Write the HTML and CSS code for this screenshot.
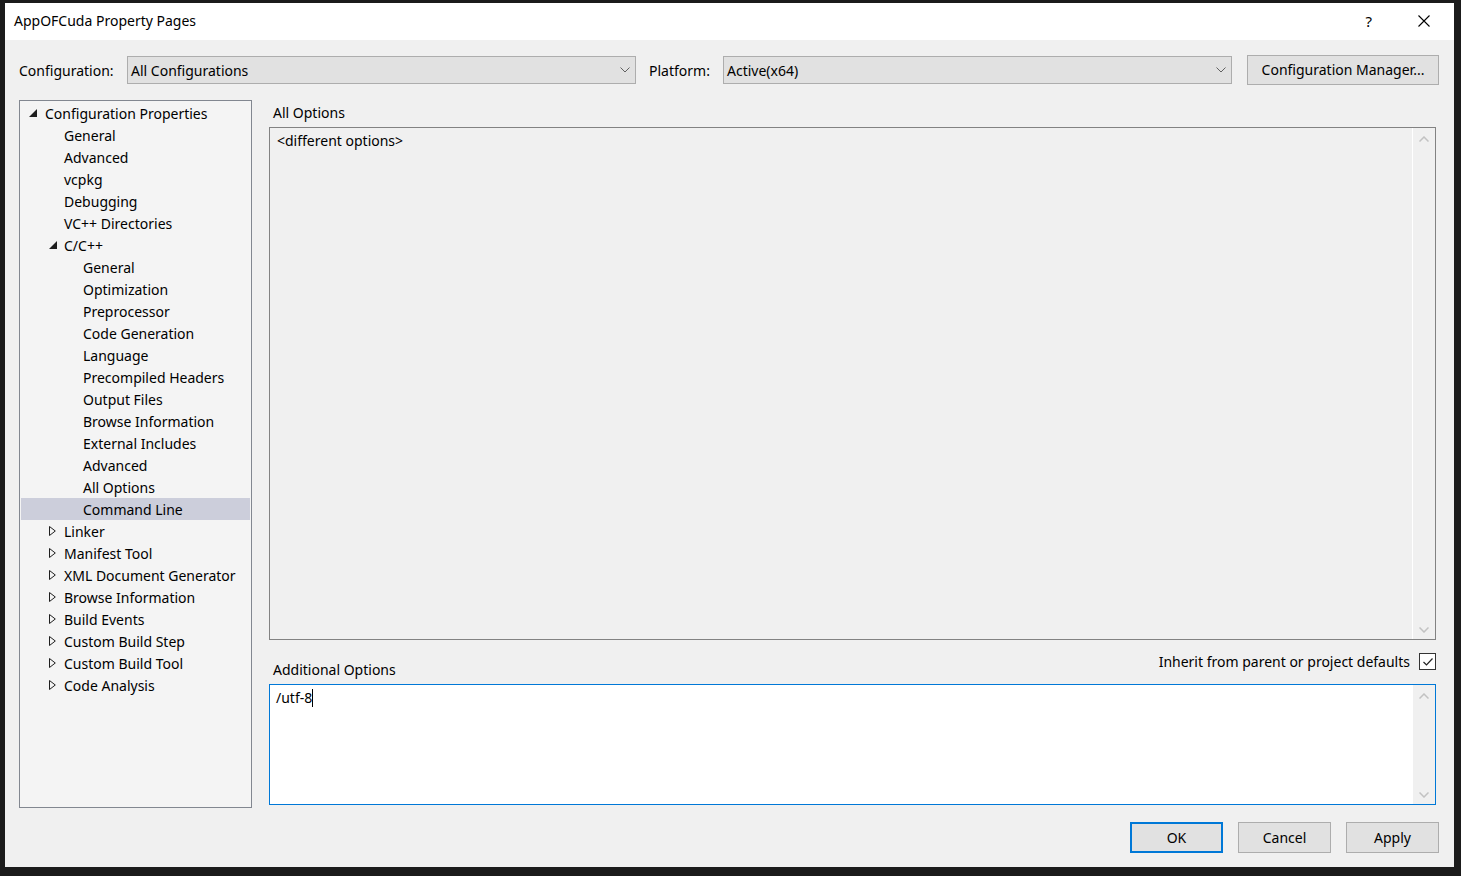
FILE: index.html
```html
<!DOCTYPE html>
<html lang="en">
<head>
    <meta charset="UTF-8">
    <title>AppOFCuda Property Pages</title>
    <link rel="stylesheet" href="styles.css">
</head>
<body>
    <div class="dialog">
        <!-- Title bar -->
        <div class="title-bar">
            <span class="title">AppOFCuda Property Pages</span>
            <span class="help">?</span>
            <svg class="close" width="12" height="12" viewBox="0 0 12 12"><path d="M0.5 0.5 L11.5 11.5 M11.5 0.5 L0.5 11.5" stroke="#000" stroke-width="1.1" fill="none"/></svg>
        </div>

        <div class="dialog-body">
            <!-- Configuration row -->
            <div class="config-row">
                <span class="config-label">Configuration:</span>
                <div class="combo combo-config">
                    <span>All Configurations</span>
                    <svg class="chevron" width="10" height="6" viewBox="0 0 10 6"><path d="M0.5 0.5 L5 5 L9.5 0.5" stroke="#606060" fill="none"/></svg>
                </div>
                <span class="platform-label">Platform:</span>
                <div class="combo combo-platform">
                    <span>Active(x64)</span>
                    <svg class="chevron" width="10" height="6" viewBox="0 0 10 6"><path d="M0.5 0.5 L5 5 L9.5 0.5" stroke="#606060" fill="none"/></svg>
                </div>
                <button class="btn btn-manager">Configuration Manager...</button>
            </div>

            <!-- Main area -->
            <div class="main">
                <div class="tree" id="tree"></div>

                <div class="options">
                    <div class="options-label">All Options</div>
                    <div class="textbox textbox-all">
                        <div class="textbox-text">&lt;different options&gt;</div>
                        <div class="scrollbar">
                            <svg width="10" height="6" viewBox="0 0 10 6"><path d="M0.5 5.5 L5 1 L9.5 5.5" stroke="#c2c2c2" stroke-width="1.5" fill="none"/></svg>
                            <svg width="10" height="6" viewBox="0 0 10 6"><path d="M0.5 0.5 L5 5 L9.5 0.5" stroke="#c2c2c2" stroke-width="1.5" fill="none"/></svg>
                        </div>
                    </div>
                    <div class="additional-row">
                        <span class="additional-label">Additional Options</span>
                        <span class="inherit">
                            Inherit from parent or project defaults
                            <span class="checkbox">
                                <svg width="14" height="14" viewBox="0 0 14 14"><path d="M2.5 7 L5.5 10 L11.5 3.5" stroke="#222" stroke-width="1.2" fill="none"/></svg>
                            </span>
                        </span>
                    </div>
                    <div class="textbox textbox-additional">
                        <div class="textbox-text">/utf-8<span class="caret"></span></div>
                        <div class="scrollbar">
                            <svg width="10" height="6" viewBox="0 0 10 6"><path d="M0.5 5.5 L5 1 L9.5 5.5" stroke="#c2c2c2" stroke-width="1.5" fill="none"/></svg>
                            <svg width="10" height="6" viewBox="0 0 10 6"><path d="M0.5 0.5 L5 5 L9.5 0.5" stroke="#c2c2c2" stroke-width="1.5" fill="none"/></svg>
                        </div>
                    </div>
                </div>
            </div>

            <!-- Buttons -->
            <div class="button-row">
                <button class="btn btn-ok">OK</button>
                <button class="btn">Cancel</button>
                <button class="btn">Apply</button>
            </div>
        </div>
    </div>

    <script>
        // Tree items: [label, level, state] state: 'open', 'closed' or ''
        const treeItems = [
            ['Configuration Properties', 0, 'open'],
            ['General', 1, ''],
            ['Advanced', 1, ''],
            ['vcpkg', 1, ''],
            ['Debugging', 1, ''],
            ['VC++ Directories', 1, ''],
            ['C/C++', 1, 'open'],
            ['General', 2, ''],
            ['Optimization', 2, ''],
            ['Preprocessor', 2, ''],
            ['Code Generation', 2, ''],
            ['Language', 2, ''],
            ['Precompiled Headers', 2, ''],
            ['Output Files', 2, ''],
            ['Browse Information', 2, ''],
            ['External Includes', 2, ''],
            ['Advanced', 2, ''],
            ['All Options', 2, ''],
            ['Command Line', 2, '', true],
            ['Linker', 1, 'closed'],
            ['Manifest Tool', 1, 'closed'],
            ['XML Document Generator', 1, 'closed'],
            ['Browse Information', 1, 'closed'],
            ['Build Events', 1, 'closed'],
            ['Custom Build Step', 1, 'closed'],
            ['Custom Build Tool', 1, 'closed'],
            ['Code Analysis', 1, 'closed']
        ];

        const openArrow = '<svg width="8" height="8" viewBox="0 0 8 8"><path d="M8 0 L8 8 L0 8 Z" fill="#1e1e1e"/></svg>';
        const closedArrow = '<svg width="7" height="10" viewBox="0 0 7 10"><path d="M0.5 0.5 L6.3 5 L0.5 9.5 Z" stroke="#1e1e1e" fill="none"/></svg>';

        const tree = document.getElementById('tree');
        treeItems.forEach(function(item) {
            const row = document.createElement('div');
            row.className = 'tree-row level-' + item[1] + (item[3] ? ' selected' : '');
            const arrow = document.createElement('span');
            arrow.className = 'tree-arrow';
            if (item[2] === 'open') arrow.innerHTML = openArrow;
            if (item[2] === 'closed') arrow.innerHTML = closedArrow;
            const label = document.createElement('span');
            label.textContent = item[0];
            row.appendChild(arrow);
            row.appendChild(label);
            tree.appendChild(row);
        });
    </script>
</body>
</html>
```

FILE: styles.css
```css
body {
    margin: 0;
    background: #1b1b1b;
    font-family: "Noto Sans", sans-serif;
    font-size: 14px;
    color: #000;
}

.dialog {
    margin: 3px 0 0 5px;
    width: 1449px;
    height: 864px;
    background: #f0f0f0;
    display: flex;
    flex-direction: column;
}

.title-bar {
    height: 37px;
    background: #fff;
    display: flex;
    align-items: center;
    padding-left: 9px;
    padding-right: 24px;
    padding-bottom: 2px;
    box-sizing: border-box;
}

.title {
    flex: 1;
    font-size: 14px;
}

.help {
    font-size: 15px;
    margin-right: 46px;
}

.dialog-body {
    flex: 1;
    display: flex;
    flex-direction: column;
    padding: 15px 15px 0 14px;
}

.config-row {
    display: flex;
    align-items: center;
    height: 29px;
}

.config-label {
    width: 108px;
    padding-top: 2px;
}

.platform-label {
    width: 74px;
    margin-left: 13px;
    padding-top: 2px;
}

.combo {
    box-sizing: border-box;
    width: 509px;
    height: 28px;
    background: #e1e1e1;
    border: 1px solid #adadad;
    display: flex;
    align-items: center;
    padding: 1px 5px 0 3px;
}

.combo span {
    flex: 1;
}

.btn {
    box-sizing: border-box;
    font-family: "Noto Sans", sans-serif;
    font-size: 14px;
    color: #000;
    background: #e1e1e1;
    border: 1px solid #adadad;
    padding: 0;
    width: 93px;
    height: 31px;
}

.btn-manager {
    width: 192px;
    height: 30px;
    margin-left: 15px;
}

.btn-ok {
    border: 2px solid #0078d7;
}

.main {
    display: flex;
    margin-top: 16px;
    height: 708px;
}

.tree {
    box-sizing: border-box;
    width: 233px;
    height: 708px;
    background: #f4f4f4;
    border: 1px solid #828790;
    padding: 1px;
}

.tree-row {
    height: 22px;
    display: flex;
    align-items: center;
    white-space: nowrap;
}

.tree-row.selected {
    background: #cccedb;
}

.level-0 { padding-left: 8px; }
.level-1 { padding-left: 28px; }
.level-2 { padding-left: 47px; }

.level-0 .tree-arrow { width: 16px; }
.level-1 .tree-arrow,
.level-2 .tree-arrow { width: 15px; }

.tree-arrow {
    display: flex;
    align-items: center;
}

.options {
    margin-left: 17px;
    width: 1167px;
    display: flex;
    flex-direction: column;
}

.options-label {
    height: 27px;
    padding-left: 4px;
    line-height: 26px;
}

.textbox {
    box-sizing: border-box;
    display: flex;
}

.textbox-all {
    height: 513px;
    border: 1px solid #828282;
    background: #f0f0f0;
}

.textbox-additional {
    height: 121px;
    border: 1px solid #0078d7;
    background: #fff;
}

.textbox-text {
    flex: 1;
    padding: 3px 7px;
    display: flex;
    align-items: flex-start;
}

.textbox-additional .textbox-text {
    padding-left: 6px;
    padding-top: 3px;
}

.caret {
    width: 1px;
    height: 18px;
    background: #000;
    margin-top: 1px;
}

.scrollbar {
    width: 21px;
    background: #f0f0f0;
    border-left: 1px solid #fff;
    display: flex;
    flex-direction: column;
    justify-content: space-between;
    align-items: center;
    padding: 8px 1px 6px 0;
}

.textbox-additional .scrollbar {
    border-left: none;
    width: 21px;
}

.additional-row {
    height: 44px;
    display: flex;
    justify-content: space-between;
    align-items: flex-start;
}

.additional-label {
    padding-left: 4px;
    margin-top: 20px;
}

.inherit {
    display: flex;
    align-items: center;
    gap: 9px;
    margin-top: 12px;
}

.checkbox {
    box-sizing: border-box;
    width: 17px;
    height: 17px;
    border: 1px solid #333;
    background: #fff;
    display: flex;
    align-items: center;
    justify-content: center;
}

.button-row {
    display: flex;
    justify-content: flex-end;
    gap: 15px;
    margin-top: 14px;
}
```
